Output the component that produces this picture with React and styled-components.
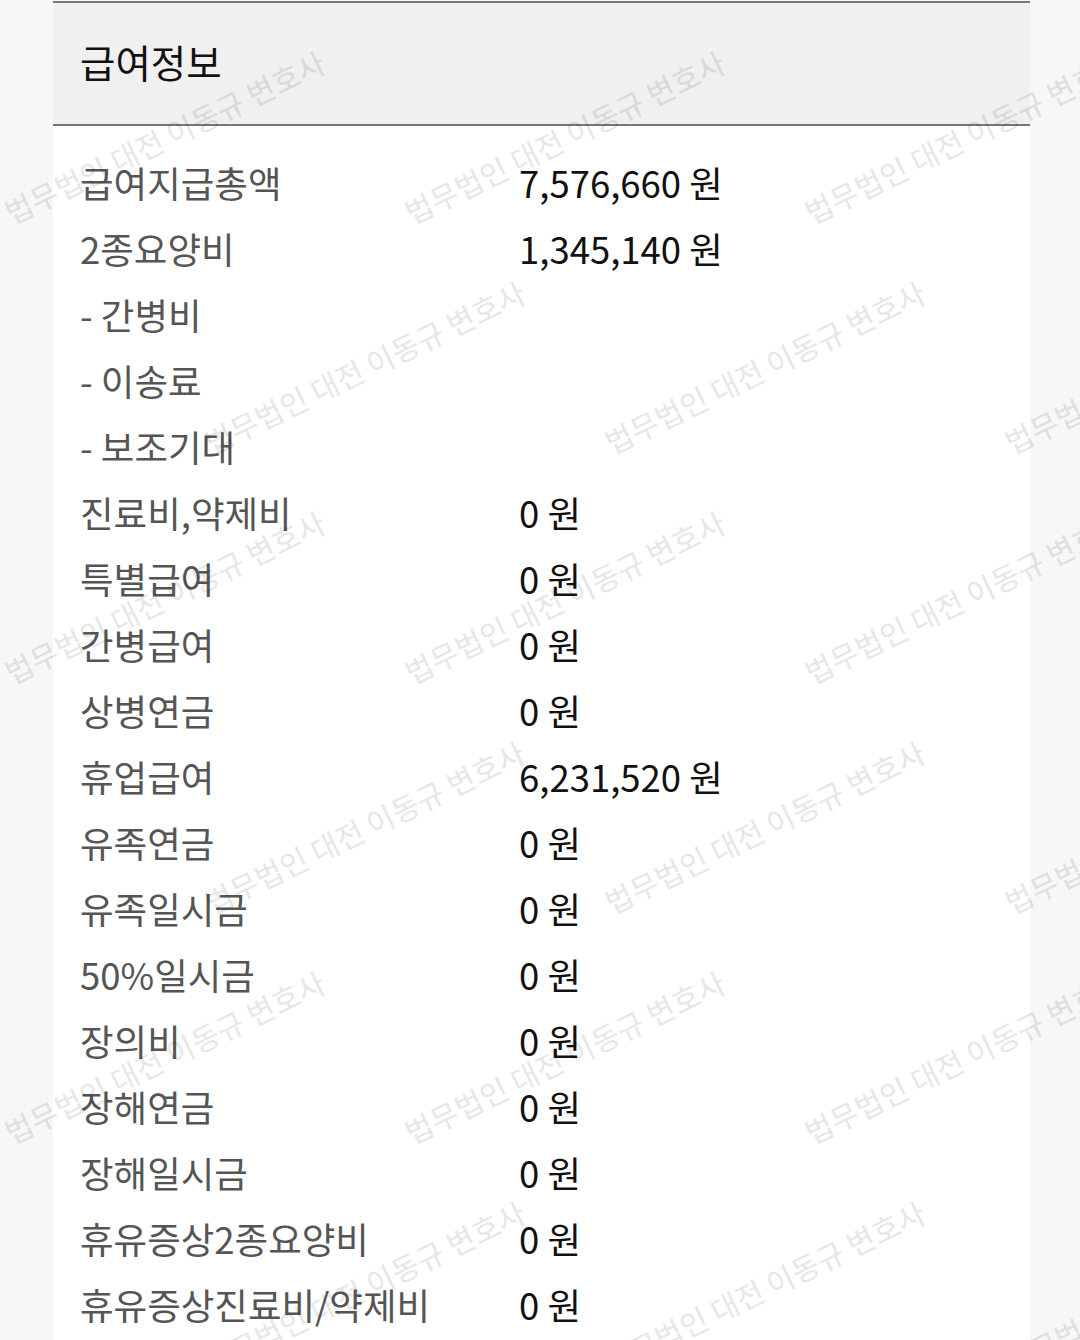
import React from "react";
import styled, { createGlobalStyle } from "styled-components";

const Global = createGlobalStyle`
  html, body { margin: 0; padding: 0; background: #f7f7f7; }
  body { font-family: "Noto Sans CJK KR", "Noto Sans", sans-serif; }
`;

const Page = styled.div`
  position: relative;
  height: 1340px;
  overflow: hidden;
  padding: 1px 50px 0 53px;
  box-sizing: border-box;
  background: #f7f7f7;
`;

const Panel = styled.section`
  background: #ffffff;
  border-top: 2px solid #777777;
  height: 100%;
`;

const Header = styled.header`
  height: 123px;
  background: #f0f0f0;
  border-bottom: 2px solid #777777;
  display: flex;
  align-items: center;
  padding: 0 27px 5px;
  box-sizing: border-box;
`;

const Title = styled.h2`
  margin: 0;
  font-size: 38.5px;
  font-weight: 400;
  color: #111111;
  letter-spacing: 0;
`;

const List = styled.div`
  display: flex;
  flex-direction: column;
  padding: 24px 27px 0;
`;

const Row = styled.div`
  display: grid;
  grid-template-columns: 439px 1fr;
  height: 66px;
  align-items: center;
  font-size: 36.5px;
  line-height: 66px;
`;

const Label = styled.span`
  color: #555555;
  white-space: nowrap;
`;

const Value = styled.span`
  color: #111111;
  white-space: nowrap;
`;

const Overlay = styled.div`
  position: absolute;
  inset: 0;
  pointer-events: none;
`;

const Mark = styled.span`
  position: absolute;
  font-size: 30px;
  line-height: 30px;
  font-weight: 500;
  color: rgba(0, 0, 0, 0.09);
  white-space: nowrap;
  transform-origin: 0 100%;
  transform: rotate(-26deg);
`;

const rows = [
  ["급여지급총액", "7,576,660 원"],
  ["2종요양비", "1,345,140 원"],
  ["- 간병비", ""],
  ["- 이송료", ""],
  ["- 보조기대", ""],
  ["진료비,약제비", "0 원"],
  ["특별급여", "0 원"],
  ["간병급여", "0 원"],
  ["상병연금", "0 원"],
  ["휴업급여", "6,231,520 원"],
  ["유족연금", "0 원"],
  ["유족일시금", "0 원"],
  ["50%일시금", "0 원"],
  ["장의비", "0 원"],
  ["장해연금", "0 원"],
  ["장해일시금", "0 원"],
  ["휴유증상2종요양비", "0 원"],
  ["휴유증상진료비/약제비", "0 원"],
];

const marks = [];
for (let r = 1; r < 7; r++) {
  const y = -3 + r * 230;
  const offset = r % 2 === 0 ? 213 : 13;
  for (let c = 0; c < 3; c++) {
    marks.push({ x: offset + c * 400, y });
  }
}

export default function App() {
  return (
    <>
      <Global />
      <Page>
        <Panel>
          <Header>
            <Title>급여정보</Title>
          </Header>
          <List>
            {rows.map(([l, v]) => (
              <Row key={l}>
                <Label>{l}</Label>
                <Value>{v}</Value>
              </Row>
            ))}
          </List>
        </Panel>
        <Overlay>
          {marks.map((m, i) => (
            <Mark key={i} style={{ left: m.x, top: m.y - 30 }}>
              법무법인 대전 이동규 변호사
            </Mark>
          ))}
        </Overlay>
      </Page>
    </>
  );
}
